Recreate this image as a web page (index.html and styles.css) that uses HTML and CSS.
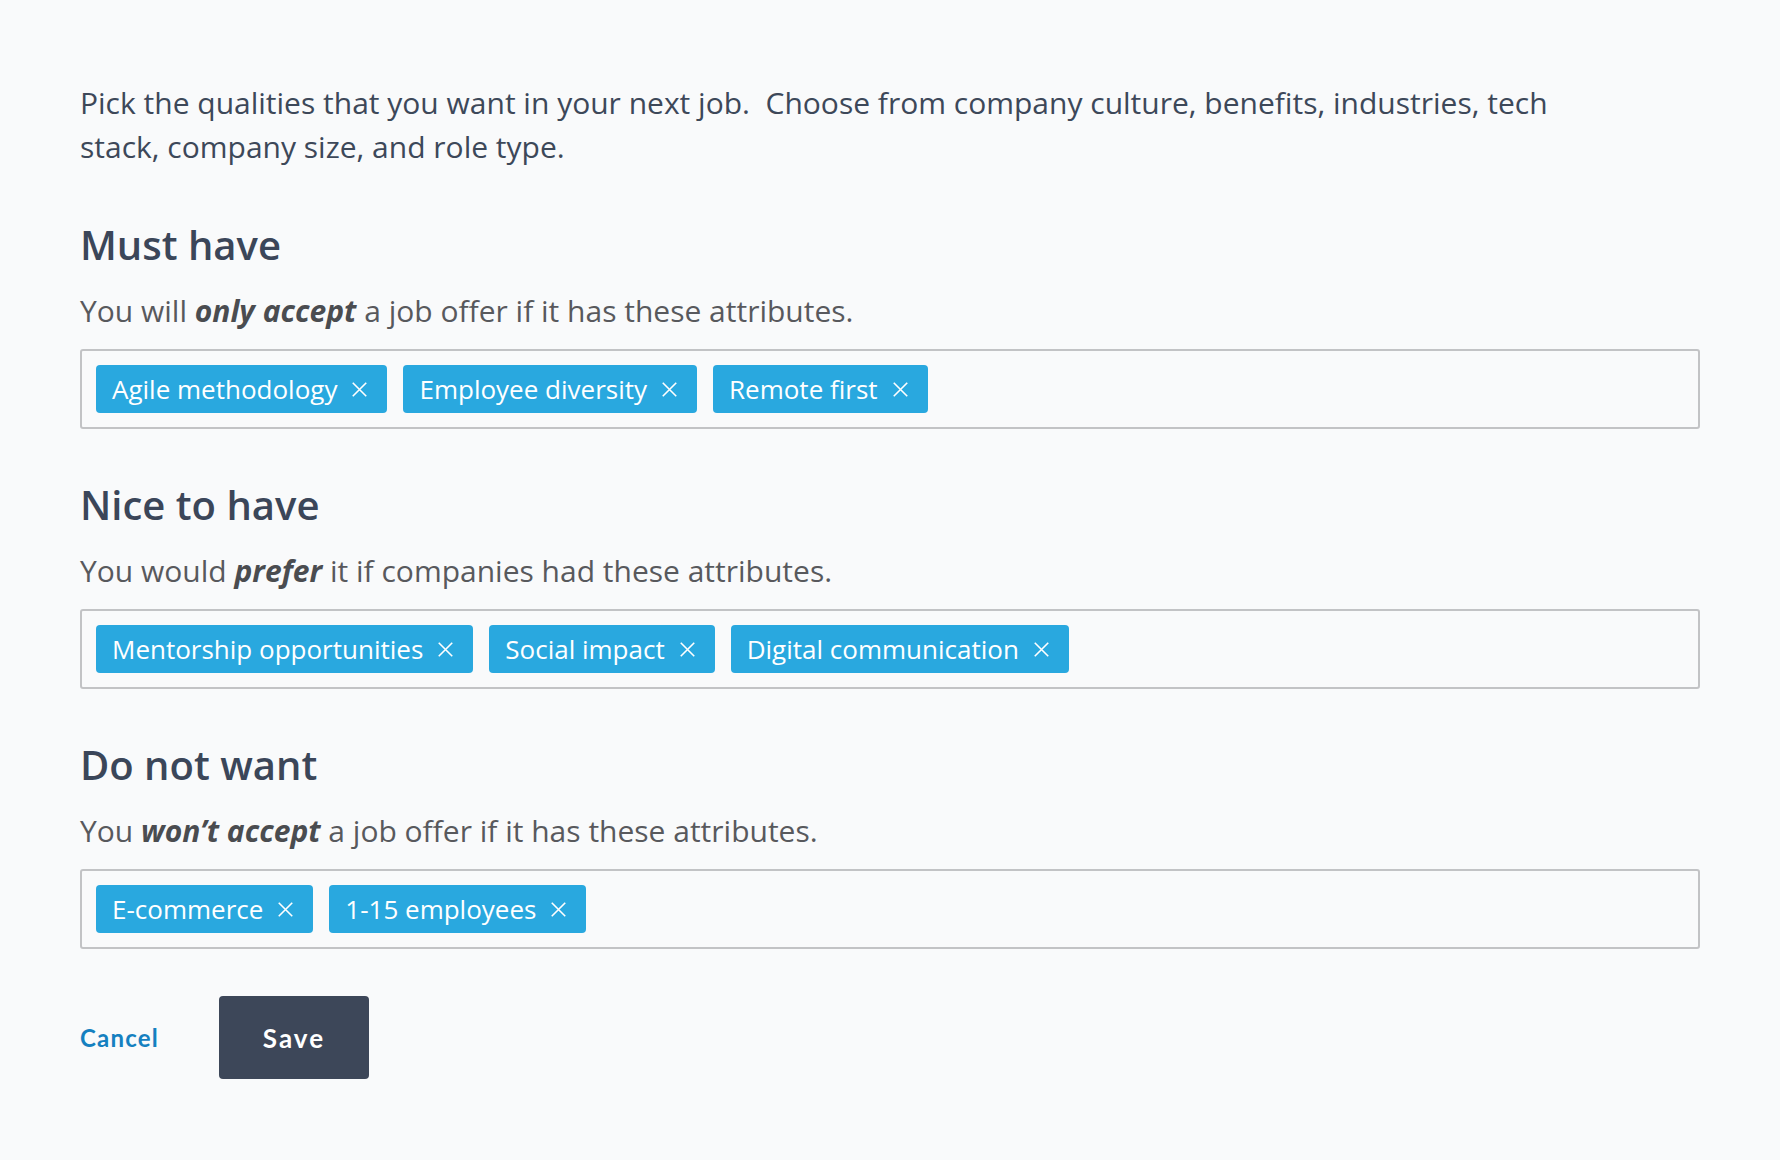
FILE: index.html
```html
<!DOCTYPE html>
<html lang="en">
<head>
<meta charset="utf-8">
<title>Job preferences</title>
<link rel="stylesheet" href="styles.css">
</head>
<body>
<main class="page">
  <p class="intro">Pick the qualities that you want in your next job.&nbsp; Choose from company culture, benefits, industries, tech stack, company size, and role type.</p>

  <section class="group">
    <h2 class="group-title">Must have</h2>
    <p class="group-desc">You will <strong><em>only accept</em></strong> a job offer if it has these attributes.</p>
    <div class="tag-box">
      <span class="tag">Agile methodology<svg class="tag-x" viewBox="0 0 15 15"><path d="M0.75 0.75L14.25 14.25M14.25 0.75L0.75 14.25"/></svg></span>
      <span class="tag">Employee diversity<svg class="tag-x" viewBox="0 0 15 15"><path d="M0.75 0.75L14.25 14.25M14.25 0.75L0.75 14.25"/></svg></span>
      <span class="tag">Remote first<svg class="tag-x" viewBox="0 0 15 15"><path d="M0.75 0.75L14.25 14.25M14.25 0.75L0.75 14.25"/></svg></span>
    </div>
  </section>

  <section class="group">
    <h2 class="group-title">Nice to have</h2>
    <p class="group-desc">You would <strong><em>prefer</em></strong> it if companies had these attributes.</p>
    <div class="tag-box">
      <span class="tag">Mentorship opportunities<svg class="tag-x" viewBox="0 0 15 15"><path d="M0.75 0.75L14.25 14.25M14.25 0.75L0.75 14.25"/></svg></span>
      <span class="tag">Social impact<svg class="tag-x" viewBox="0 0 15 15"><path d="M0.75 0.75L14.25 14.25M14.25 0.75L0.75 14.25"/></svg></span>
      <span class="tag">Digital communication<svg class="tag-x" viewBox="0 0 15 15"><path d="M0.75 0.75L14.25 14.25M14.25 0.75L0.75 14.25"/></svg></span>
    </div>
  </section>

  <section class="group">
    <h2 class="group-title">Do not want</h2>
    <p class="group-desc">You <strong><em>won’t accept</em></strong> a job offer if it has these attributes.</p>
    <div class="tag-box">
      <span class="tag">E-commerce<svg class="tag-x" viewBox="0 0 15 15"><path d="M0.75 0.75L14.25 14.25M14.25 0.75L0.75 14.25"/></svg></span>
      <span class="tag">1-15 employees<svg class="tag-x" viewBox="0 0 15 15"><path d="M0.75 0.75L14.25 14.25M14.25 0.75L0.75 14.25"/></svg></span>
    </div>
  </section>

  <div class="actions">
    <a class="cancel" href="#">Cancel</a>
    <button class="save" type="button">Save</button>
  </div>
</main>
</body>
</html>
```

FILE: styles.css
```css
html, body {
  margin: 0;
  padding: 0;
  background: #f9fafb;
}

body {
  font-family: "Open Sans", "Noto Sans", sans-serif;
  color: #3d4859;
}

.page {
  padding: 81px 80px 60px 80px;
}

.intro {
  margin: 0;
  font-size: 30px;
  line-height: 44px;
  color: #3d4859;
  max-width: 1500px;
}

.group {
  margin-top: 52px;
}

.group-title {
  margin: 0;
  font-size: 40px;
  line-height: 48px;
  font-weight: 600;
  color: #3b4659;
}

.group-desc {
  margin: 20px 0 0 0;
  font-size: 30px;
  line-height: 44px;
  color: #58595d;
}

.group-desc strong {
  font-weight: 700;
  color: #4a4c50;
}

.tag-box {
  margin-top: 16px;
  border: 2px solid #c2c3c5;
  border-radius: 3px;
  padding: 14px 14px;
  display: flex;
  flex-wrap: wrap;
  gap: 16px;
  min-height: 48px;
}

.tag {
  display: inline-flex;
  align-items: center;
  height: 48px;
  padding: 0 20px 0 16px;
  background: #29a8df;
  color: #ffffff;
  border-radius: 4px;
  font-size: 26px;
  line-height: 48px;
  white-space: nowrap;
}

.tag-x {
  width: 15px;
  height: 15px;
  margin-left: 15px;
  fill: none;
  stroke: #ffffff;
  stroke-width: 1.6;
}

.actions {
  margin-top: 47px;
  display: flex;
  align-items: center;
  gap: 60px;
}

.cancel {
  font-family: Lato, "Open Sans", sans-serif;
  font-weight: 700;
  font-size: 24px;
  color: #1580c0;
  text-decoration: none;
  letter-spacing: 1.2px;
}

.save {
  width: 150px;
  height: 83px;
  border: none;
  border-radius: 4px;
  background: #3d4759;
  color: #ffffff;
  font-family: Lato, "Open Sans", sans-serif;
  font-weight: 700;
  font-size: 26px;
  letter-spacing: 2px;
  cursor: pointer;
}
```
